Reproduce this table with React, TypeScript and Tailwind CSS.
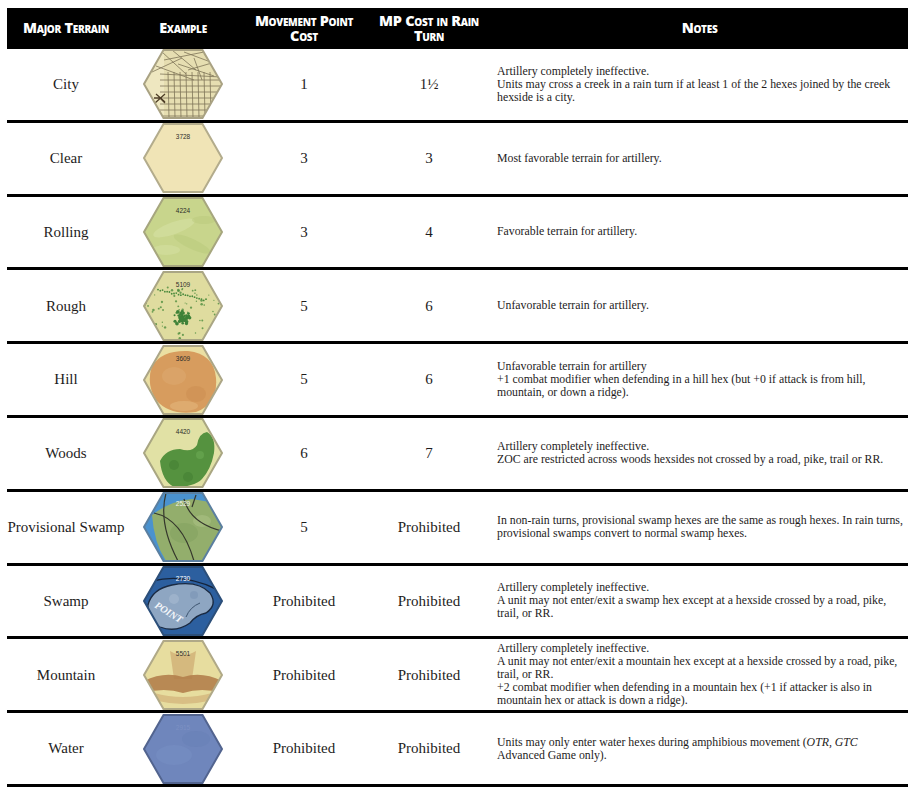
import React from "react";

const HEX = "0,34 19.5,0 58.5,0 78,34 58.5,68 19.5,68";

function rand(seed: number) {
  let s = seed;
  return () => {
    s = (s * 9301 + 49297) % 233280;
    return s / 233280;
  };
}

function Num({ t, fill = "#2f2f2a", y = 15 }: { t: string; fill?: string; y?: number }) {
  return (
    <text
      x="39"
      y={y}
      fontSize="6.5"
      textAnchor="middle"
      fontFamily="'Liberation Sans', Arial, sans-serif"
      fill={fill}
    >
      {t}
    </text>
  );
}

function Hex({
  id,
  fill,
  stroke = "#aaa486",
  children,
}: {
  id: string;
  fill: string;
  stroke?: string;
  children?: React.ReactNode;
}) {
  return (
    <svg width="78" height="68" viewBox="0 0 78 68" overflow="visible" className="block">
      <defs>
        <clipPath id={`c-${id}`}>
          <polygon points={HEX} />
        </clipPath>
      </defs>
      <g clipPath={`url(#c-${id})`}>
        <rect x="0" y="0" width="78" height="68" fill={fill} />
        {children}
      </g>
      <polygon points={HEX} fill="none" stroke={stroke} strokeWidth="2" strokeLinejoin="miter" />
    </svg>
  );
}

function CityHex() {
  const vx = [24, 30, 36, 42, 48, 54, 60, 66];
  const hy = [30, 36, 42, 48, 54, 60, 66];
  return (
    <Hex id="city" fill="#e6deb1" stroke="#a9a283">
      <rect x="0" y="0" width="20" height="68" fill="#eee7c0" />
      {vx.map((x) => (
        <line key={"v" + x} x1={x} y1={22} x2={x + 1} y2={68} stroke="#7f7558" strokeWidth="0.8" />
      ))}
      {hy.map((y) => (
        <line key={"h" + y} x1={16} y1={y} x2={78} y2={y} stroke="#7f7558" strokeWidth="0.8" />
      ))}
      <g stroke="#7f7558" strokeWidth="0.8" fill="none">
        <line x1="18" y1="2" x2="42" y2="24" />
        <line x1="28" y1="0" x2="52" y2="20" />
        <line x1="40" y1="2" x2="72" y2="14" />
        <line x1="8" y1="22" x2="38" y2="8" />
        <line x1="50" y1="8" x2="58" y2="30" />
        <line x1="60" y1="4" x2="78" y2="24" />
        <line x1="12" y1="16" x2="50" y2="30" />
        <line x1="44" y1="20" x2="78" y2="10" />
        <line x1="20" y1="10" x2="60" y2="2" />
        <line x1="34" y1="14" x2="70" y2="26" />
        <line x1="16" y1="24" x2="78" y2="27" />
      </g>
      <path d="M12 44 l9 8 M11 53 l10 -9 M15 47 l6 6 M10 48 l8 0" stroke="#4f3f28" strokeWidth="1.3" fill="none" />
    </Hex>
  );
}

function ClearHex() {
  return (
    <Hex id="clear" fill="#f0e4b6" stroke="#b3ac8c">
      <Num t="3728" />
    </Hex>
  );
}

function RollingHex() {
  return (
    <Hex id="rolling" fill="#c8d58c" stroke="#a6a67e">
      <ellipse cx="30" cy="30" rx="22" ry="6" fill="#d6e1a3" opacity="0.6" transform="rotate(-20 30 30)" />
      <ellipse cx="48" cy="46" rx="20" ry="5" fill="#b8c97a" opacity="0.5" transform="rotate(25 48 46)" />
      <ellipse cx="22" cy="52" rx="14" ry="5" fill="#d4dfa0" opacity="0.6" />
      <ellipse cx="60" cy="22" rx="12" ry="4" fill="#b9c97c" opacity="0.5" />
      <Num t="4224" />
    </Hex>
  );
}

function RoughHex() {
  const r = rand(7);
  const dots: React.ReactNode[] = [];
  for (let i = 0; i < 70; i++) {
    const x = r() * 78;
    const y = 14 + r() * 54;
    dots.push(<circle key={i} cx={x} cy={y} r={0.6 + r() * 0.7} fill="#4f8d3e" opacity="0.8" />);
  }
  for (let i = 0; i < 45; i++) {
    const a = r() * Math.PI * 2;
    const d = r() * 9;
    dots.push(
      <circle key={"c" + i} cx={38 + Math.cos(a) * d} cy={46 + Math.sin(a) * d * 0.8} r={1 + r()} fill="#3f8238" />
    );
  }
  for (let i = 0; i < 22; i++) {
    const t = i / 21;
    dots.push(
      <circle key={"l" + i} cx={14 + t * 48} cy={18 + t * 10 + (r() - 0.5) * 2} r={0.9} fill="#4a8a3c" />
    );
  }
  return (
    <Hex id="rough" fill="#dfdc9f" stroke="#aaa684">
      {dots}
      <Num t="5109" />
    </Hex>
  );
}

function HillHex() {
  return (
    <Hex id="hill" fill="#eadfa3" stroke="#aca687">
      <path d="M8 20 Q 18 4 44 5 Q 70 8 72 32 Q 74 58 52 66 Q 26 70 12 54 Q 2 38 8 20 Z" fill="#d79c5e" />
      <ellipse cx="30" cy="30" rx="12" ry="9" fill="#dba56a" opacity="0.8" />
      <ellipse cx="52" cy="48" rx="10" ry="8" fill="#cf9254" opacity="0.7" />
      <ellipse cx="40" cy="60" rx="14" ry="5" fill="#e3b67c" opacity="0.6" />
      <Num t="3609" />
    </Hex>
  );
}

function WoodsHex() {
  return (
    <Hex id="woods" fill="#e1e1a5" stroke="#a9a682">
      <path
        d="M16 42 Q 22 30 36 30 Q 48 34 53 26 Q 55 14 63 13 Q 72 18 70 34 Q 67 50 58 60 Q 50 68 30 68 Q 18 62 16 42 Z"
        fill="#55923f"
      />
      <circle cx="30" cy="46" r="5" fill="#4b8738" />
      <circle cx="56" cy="36" r="4" fill="#62a04b" />
      <circle cx="44" cy="58" r="5" fill="#4b8738" />
      <Num t="4420" />
    </Hex>
  );
}

function ProvSwampHex() {
  return (
    <Hex id="pswamp" fill="#4a92cf" stroke="#5b7fa0">
      <path d="M8 22 Q 26 8 48 6 L 72 10 L 78 30 L 78 68 L 22 68 Q 10 50 8 22 Z" fill="#93ae6c" />
      <ellipse cx="40" cy="40" rx="14" ry="10" fill="#86a462" opacity="0.7" />
      <ellipse cx="58" cy="28" rx="9" ry="6" fill="#a6bd80" opacity="0.7" />
      <g stroke="#35372c" strokeWidth="1.2" fill="none">
        <path d="M22 0 Q 14 30 34 68" />
        <path d="M10 20 Q 38 26 50 68" />
        <path d="M40 6 Q 46 30 78 38" />
        <path d="M52 2 L 48 14" />
      </g>
      <Num t="2529" fill="#f4f4ee" y={13} />
    </Hex>
  );
}

function SwampHex() {
  return (
    <Hex id="swamp" fill="#2c5f9f" stroke="#2c4f7a">
      <path
        d="M4 38 Q 8 22 28 18 Q 54 13 66 26 Q 74 38 62 46 Q 52 48 46 56 Q 32 66 16 60 Q 3 53 4 38 Z"
        fill="#8ea6c2"
        stroke="#1a2a42"
        strokeWidth="1.3"
      />
      <path d="M8 14 Q 40 6 72 22" stroke="#15243b" strokeWidth="1.4" fill="none" />
      <path d="M56 36 Q 46 40 42 50" stroke="#3e5570" strokeWidth="1" fill="none" />
      <circle cx="30" cy="32" r="5" fill="#a4b8cf" opacity="0.7" />
      <circle cx="50" cy="28" r="4" fill="#7e97b6" opacity="0.7" />
      <Num t="2730" fill="#ffffff" y={14} />
      <text
        x="10"
        y="40"
        fontSize="10"
        fontWeight="bold"
        fontStyle="italic"
        fontFamily="'Liberation Serif', serif"
        fill="#f4f6fa"
        transform="rotate(32 10 40)"
      >
        POINT
      </text>
    </Hex>
  );
}

function MountainHex() {
  return (
    <Hex id="mountain" fill="#e7dd9f" stroke="#b0a987">
      <path d="M26 10 Q 39 18 52 10 L 48 38 L 30 38 Z" fill="#c69a62" opacity="0.55" />
      <path
        d="M0 40 Q 20 30 39 36 Q 58 30 78 40 L 78 52 Q 58 46 39 52 Q 20 46 0 52 Z"
        fill="#b2804b"
        opacity="0.9"
      />
      <path d="M10 52 Q 39 60 68 52 L 64 60 Q 39 66 14 60 Z" fill="#c9a06a" opacity="0.5" />
      <Num t="5501" />
    </Hex>
  );
}

function WaterHex() {
  return (
    <Hex id="water" fill="#6f86bc" stroke="#52648f">
      <ellipse cx="30" cy="40" rx="18" ry="10" fill="#7890c4" opacity="0.5" />
      <ellipse cx="52" cy="24" rx="14" ry="8" fill="#6880b6" opacity="0.5" />
      <Num t="2915" fill="#7d91c3" />
    </Hex>
  );
}

type Row = {
  name: string;
  hex: React.ReactNode;
  mp: string;
  rain: string;
  notes: React.ReactNode[];
};

const rows: Row[] = [
  {
    name: "City",
    hex: <CityHex />,
    mp: "1",
    rain: "1½",
    notes: [
      "Artillery completely ineffective.",
      "Units may cross a creek in a rain turn if at least 1 of the 2 hexes joined by the creek",
      "hexside is a city.",
    ],
  },
  { name: "Clear", hex: <ClearHex />, mp: "3", rain: "3", notes: ["Most favorable terrain for artillery."] },
  { name: "Rolling", hex: <RollingHex />, mp: "3", rain: "4", notes: ["Favorable terrain for artillery."] },
  { name: "Rough", hex: <RoughHex />, mp: "5", rain: "6", notes: ["Unfavorable terrain for artillery."] },
  {
    name: "Hill",
    hex: <HillHex />,
    mp: "5",
    rain: "6",
    notes: [
      "Unfavorable terrain for artillery",
      "+1 combat modifier when defending in a hill hex (but +0 if attack is from hill,",
      "mountain, or down a ridge).",
    ],
  },
  {
    name: "Woods",
    hex: <WoodsHex />,
    mp: "6",
    rain: "7",
    notes: [
      "Artillery completely ineffective.",
      "ZOC are restricted across woods hexsides not crossed by a road, pike, trail or RR.",
    ],
  },
  {
    name: "Provisional Swamp",
    hex: <ProvSwampHex />,
    mp: "5",
    rain: "Prohibited",
    notes: [
      "In non-rain turns, provisional swamp hexes are the same as rough hexes. In rain turns,",
      "provisional swamps convert to normal swamp hexes.",
    ],
  },
  {
    name: "Swamp",
    hex: <SwampHex />,
    mp: "Prohibited",
    rain: "Prohibited",
    notes: [
      "Artillery completely ineffective.",
      "A unit may not enter/exit a swamp hex except at a hexside crossed by a road, pike,",
      "trail, or RR.",
    ],
  },
  {
    name: "Mountain",
    hex: <MountainHex />,
    mp: "Prohibited",
    rain: "Prohibited",
    notes: [
      "Artillery completely ineffective.",
      "A unit may not enter/exit a mountain hex except at a hexside crossed by a road, pike,",
      "trail, or RR.",
      "+2 combat modifier when defending in a mountain hex (+1 if attacker is also in",
      "mountain hex or attack is down a ridge).",
    ],
  },
  {
    name: "Water",
    hex: <WaterHex />,
    mp: "Prohibited",
    rain: "Prohibited",
    notes: [
      <>
        Units may only enter water hexes during amphibious movement (<i>OTR, GTC</i>
      </>,
      "Advanced Game only).",
    ],
  },
];

const head =
  "text-white font-extrabold text-[14.5px] leading-[14.5px] tracking-[-0.3px] [font-variant-caps:small-caps] text-center flex items-center justify-center whitespace-nowrap";

export default function App() {
  return (
    <div className="w-[914px] h-[797px] bg-white overflow-hidden font-['Liberation_Serif',_'Times_New_Roman',_serif] text-[#1e1c1c]">
      <div className="ml-[7px] mt-[8px] w-[901px]">
        <div className="flex h-[41px] bg-black font-['Open_Sans',_sans-serif]">
          <div className={`${head} w-[118px]`}>Major Terrain</div>
          <div className={`${head} w-[116px]`}>Example</div>
          <div className={`${head} w-[126px] flex-col`}>
            <span className="block">Movement Point</span>
            <span className="block">Cost</span>
          </div>
          <div className={`${head} w-[124px] flex-col`}>
            <span className="block">MP Cost in Rain</span>
            <span className="block">Turn</span>
          </div>
          <div className={`${head} flex-1`}>Notes</div>
        </div>
        {rows.map((r) => (
          <div key={r.name} className="flex h-[73.8px] border-b-[3px] border-black">
            <div className="w-[118px] flex items-center justify-center text-[15px] whitespace-nowrap">{r.name}</div>
            <div className="w-[116px] flex items-center justify-center">{r.hex}</div>
            <div className="w-[126px] flex items-center justify-center text-[15px]">{r.mp}</div>
            <div className="w-[124px] flex items-center justify-center text-[15px]">{r.rain}</div>
            <div className="flex-1 flex flex-col justify-center pl-[6px] text-[11.8px] leading-[13px] whitespace-nowrap">
              {r.notes.map((n, i) => (
                <div key={i}>{n}</div>
              ))}
            </div>
          </div>
        ))}
      </div>
    </div>
  );
}
